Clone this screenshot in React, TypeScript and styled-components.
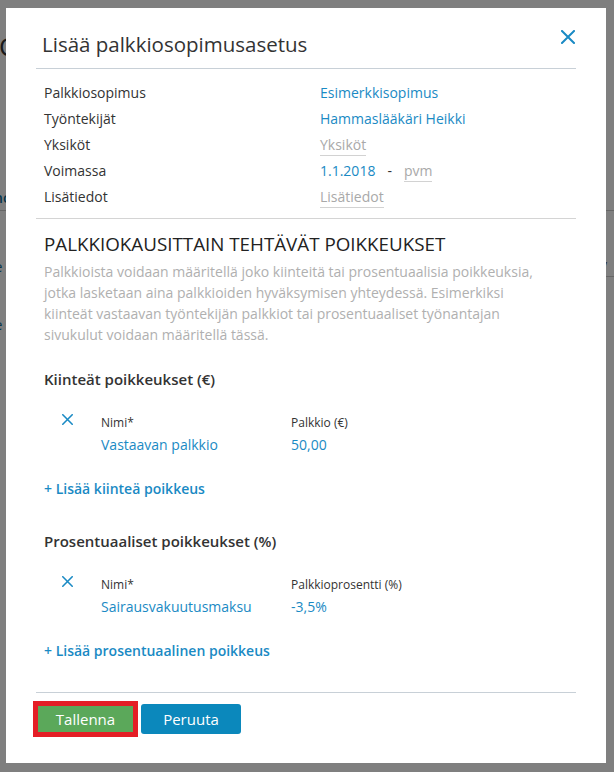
import styled, { createGlobalStyle } from "styled-components";

const GlobalStyle = createGlobalStyle`
  html, body {
    margin: 0;
    padding: 0;
  }
  body {
    font-family: "Open Sans", "Noto Sans", sans-serif;
    color: #333;
    background: #fff;
  }
  * {
    box-sizing: border-box;
  }
`;

const blue = "#1a8ac4";

type Exception = {
  name: string;
  valueLabel: string;
  value: string;
};

const fixedExceptions: Exception[] = [
  { name: "Vastaavan palkkio", valueLabel: "Palkkio (€)", value: "50,00" },
];

const percentExceptions: Exception[] = [
  { name: "Sairausvakuutusmaksu", valueLabel: "Palkkioprosentti (%)", value: "-3,5%" },
];

function CrossIcon({ size }: { size: number }) {
  return (
    <svg width={size} height={size} viewBox="0 0 14 14" fill="none">
      <path d="M1 1L13 13M13 1L1 13" stroke={blue} strokeWidth="2" strokeLinecap="square" />
    </svg>
  );
}

function ExceptionGroup({ title, items, addText }: { title: string; items: Exception[]; addText: string }) {
  return (
    <Group>
      <GroupTitle>{title}</GroupTitle>
      {items.map((item) => (
        <ExceptionRow key={item.name}>
          <RemoveButton aria-label="Poista">
            <CrossIcon size={11} />
          </RemoveButton>
          <Field>
            <FieldLabel>Nimi*</FieldLabel>
            <FieldValue>{item.name}</FieldValue>
          </Field>
          <Field>
            <FieldLabel>{item.valueLabel}</FieldLabel>
            <FieldValue>{item.value}</FieldValue>
          </Field>
        </ExceptionRow>
      ))}
      <AddLink>+ {addText}</AddLink>
    </Group>
  );
}

export default function App() {
  return (
    <Page>
      <GlobalStyle />
      <Backdrop>
        <PageTitle>C</PageTitle>
        <TabBar>
          <TabLink>nc</TabLink>
        </TabBar>
        <ListRow>
          <ListLink>le</ListLink>
          <ListMeta>v</ListMeta>
        </ListRow>
        <ListRow>
          <ListLink>le</ListLink>
        </ListRow>
      </Backdrop>

      <Overlay>
        <Modal>
          <Header>
            <Title>Lisää palkkiosopimusasetus</Title>
            <CloseButton aria-label="Sulje">
              <CrossIcon size={14} />
            </CloseButton>
          </Header>

          <InfoList>
            <InfoRow>
              <span>Palkkiosopimus</span>
              <Value>Esimerkkisopimus</Value>
            </InfoRow>
            <InfoRow>
              <span>Työntekijät</span>
              <Value>Hammaslääkäri Heikki</Value>
            </InfoRow>
            <InfoRow>
              <span>Yksiköt</span>
              <Value>
                <Placeholder>Yksiköt</Placeholder>
              </Value>
            </InfoRow>
            <InfoRow>
              <span>Voimassa</span>
              <Value>
                1.1.2018<Dash>-</Dash>
                <Placeholder>pvm</Placeholder>
              </Value>
            </InfoRow>
            <InfoRow>
              <span>Lisätiedot</span>
              <Value>
                <Placeholder>Lisätiedot</Placeholder>
              </Value>
            </InfoRow>
          </InfoList>

          <Section>
            <SectionTitle>PALKKIOKAUSITTAIN TEHTÄVÄT POIKKEUKSET</SectionTitle>
            <Intro>
              Palkkioista voidaan määritellä joko kiinteitä tai prosentuaalisia poikkeuksia,
              <br />
              jotka lasketaan aina palkkioiden hyväksymisen yhteydessä. Esimerkiksi
              <br />
              kiinteät vastaavan työntekijän palkkiot tai prosentuaaliset työnantajan
              <br />
              sivukulut voidaan määritellä tässä.
            </Intro>

            <ExceptionGroup
              title="Kiinteät poikkeukset (€)"
              items={fixedExceptions}
              addText="Lisää kiinteä poikkeus"
            />
            <ExceptionGroup
              title="Prosentuaaliset poikkeukset (%)"
              items={percentExceptions}
              addText="Lisää prosentuaalinen poikkeus"
            />
          </Section>

          <Footer>
            <Highlight>
              <Button $variant="save">Tallenna</Button>
            </Highlight>
            <Button $variant="cancel">Peruuta</Button>
          </Footer>
        </Modal>
      </Overlay>
    </Page>
  );
}

const Page = styled.div`
  position: relative;
  width: 614px;
  height: 772px;
  overflow: hidden;
`;

/* page underneath the dialog */
const Backdrop = styled.div`
  display: flex;
  flex-direction: column;
`;

const PageTitle = styled.h1`
  margin: 30px 0 0 -1px;
  font-size: 26px;
  line-height: 32px;
  font-weight: 400;
  color: #333;
`;

const TabBar = styled.div`
  margin-top: 122px;
  height: 27px;
  padding-top: 4px;
  border-bottom: 1px solid #ccc;
`;

const TabLink = styled.span`
  display: block;
  margin-left: -6px;
  font-size: 14px;
  font-weight: 600;
  color: #0b6a95;
`;

const ListRow = styled.div`
  display: flex;
  justify-content: space-between;
  height: 58px;
  padding-top: 46px;
`;

const ListLink = styled.span`
  margin-left: -9px;
  font-size: 14px;
  color: #0b6a95;
`;

const ListMeta = styled.span`
  width: 14px;
  height: 22px;
  margin-top: -2px;
  font-size: 14px;
  color: #555;
  border-bottom: 1px solid #ccc;
`;

const Overlay = styled.div`
  position: absolute;
  inset: 0;
  background: rgba(0, 0, 0, 0.5);
  padding: 8px 0 0 6px;
`;

const Modal = styled.div`
  display: flex;
  flex-direction: column;
  width: 600px;
  height: 755px;
  padding: 0 30px;
  background: #fff;
`;

const Header = styled.div`
  display: flex;
  justify-content: space-between;
  align-items: flex-start;
  height: 61px;
  padding-left: 6px;
  border-bottom: 1px solid #c8d0d7;
`;

const Title = styled.h2`
  margin: 21px 0 0;
  font-size: 20.5px;
  line-height: 30px;
  font-weight: 400;
  color: #333;
`;

const CloseButton = styled.button`
  display: flex;
  margin: 22px 1px 0 0;
  padding: 0;
  border: 0;
  background: none;
  cursor: pointer;
`;

const InfoList = styled.div`
  padding: 11px 0 8px 8px;
  border-bottom: 1px solid #d4d4d4;
`;

const InfoRow = styled.div`
  display: grid;
  grid-template-columns: 276px 1fr;
  font-size: 14px;
  line-height: 26px;
  color: #333;
`;

const Value = styled.span`
  color: ${blue};
`;

const Placeholder = styled.span`
  color: #a9a9a9;
  border-bottom: 1px solid #d2d2d2;
  padding-bottom: 1px;
`;

const Dash = styled.span`
  margin: 0 12px;
  color: #333;
`;

const Section = styled.div`
  padding-left: 8px;
`;

const SectionTitle = styled.h3`
  margin: 12px 0 0;
  font-size: 18.8px;
  line-height: 26px;
  font-weight: 400;
  color: #222;
`;

const Intro = styled.p`
  margin: 4px 0 0;
  font-size: 14px;
  line-height: 21px;
  color: #b0b0b0;
`;

const Group = styled.div`
  display: flex;
  flex-direction: column;
  margin-top: 23px;

  & + & {
    margin-top: 30px;
  }
`;

const GroupTitle = styled.h4`
  margin: 0;
  font-size: 15px;
  line-height: 22px;
  font-weight: 600;
  color: #333;
`;

const ExceptionRow = styled.div`
  display: grid;
  grid-template-columns: 57px 190px 1fr;
  margin-top: 19px;
`;

const RemoveButton = styled.button`
  display: flex;
  align-self: start;
  margin: 5px 0 0 18px;
  padding: 0;
  border: 0;
  background: none;
  cursor: pointer;
`;

const Field = styled.div`
  display: flex;
  flex-direction: column;
  padding-top: 5px;
`;

const FieldLabel = styled.span`
  font-size: 12px;
  line-height: 18px;
  color: #333;
`;

const FieldValue = styled.span`
  margin-top: 2px;
  font-size: 14px;
  line-height: 22px;
  color: ${blue};
`;

const AddLink = styled.a`
  margin-top: 22px;
  font-size: 14px;
  line-height: 22px;
  font-weight: 600;
  color: ${blue};
  cursor: pointer;
`;

const Footer = styled.div`
  display: flex;
  align-items: center;
  gap: 3px;
  height: 71px;
  margin-top: auto;
  padding-bottom: 18px;
  border-top: 1px solid #c8d0d7;
`;

const Highlight = styled.span`
  display: inline-flex;
  margin-left: -3px;
  border: 5px solid #e41e26;
`;

const Button = styled.button<{ $variant: "save" | "cancel" }>`
  width: ${(p) => (p.$variant === "save" ? "95px" : "100px")};
  height: ${(p) => (p.$variant === "save" ? "26px" : "30px")};
  padding: 0;
  border: 0;
  border-radius: ${(p) => (p.$variant === "save" ? "0" : "3px")};
  background: ${(p) => (p.$variant === "save" ? "#5ba85a" : "#0b88bc")};
  font-family: inherit;
  font-size: 15px;
  color: #fff;
  cursor: pointer;
`;
